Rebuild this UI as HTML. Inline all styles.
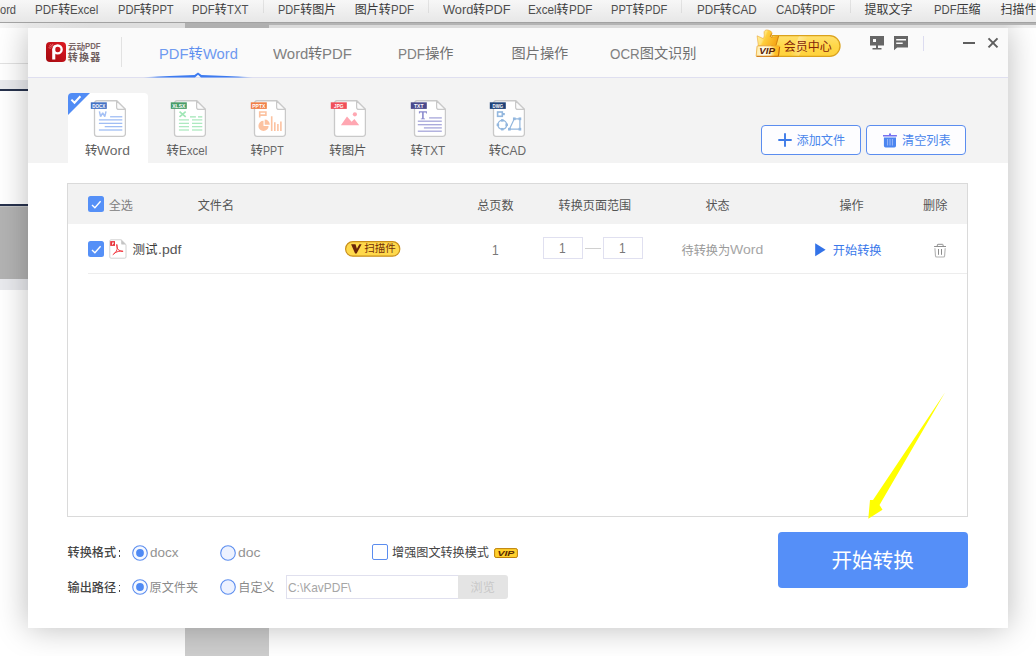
<!DOCTYPE html>
<html lang="zh"><head><meta charset="utf-8"><title>PDF转换器</title>
<style>
html,body{margin:0;padding:0}
body{width:1036px;height:656px;overflow:hidden;position:relative;background:#fff;font-family:"Liberation Sans","Noto Sans CJK SC",sans-serif}
body div,.a{position:absolute;box-sizing:border-box}
.t{white-space:nowrap;height:1em;line-height:1em}
.t::before{content:"";display:inline-block;width:0;height:1em;vertical-align:-0.12em}
.c{font-family:"Liberation Sans","Noto Sans CJK SC",sans-serif;font-size:1em;line-height:1em}
.l{font-size:1.075em;display:inline-block;transform-origin:0 0;opacity:.88}
.b .c{font-weight:bold}
.bb .c{font-weight:bold}
.bb .l{opacity:1}
.m .c{font-weight:500}
</style></head><body>
<div style="left:0px;top:63px;width:28px;height:1px;background:#e2e2e2"></div>
<div style="left:0px;top:80px;width:28px;height:9px;background:#e9eaee"></div>
<div style="left:0px;top:89px;width:28px;height:2px;background:#27324d"></div>
<div style="left:0px;top:204px;width:28px;height:2px;background:#27324d"></div>
<div style="left:0px;top:206px;width:28px;height:73px;background:#b3b3b3"></div>
<div style="left:0px;top:206px;width:28px;height:1px;background:#c6c6c6"></div>
<div style="left:0px;top:279px;width:28px;height:11px;background:#e9eaee"></div>
<div style="left:185px;top:628px;width:84px;height:28px;background:#cdcdcd"></div>
<div style="left:28px;top:28px;width:980px;height:600px;background:#fff;box-shadow:0 0 30px 0 rgba(0,0,0,.27)"></div>
<div style="left:0px;top:23px;width:185px;height:5px;background:linear-gradient(90deg,#f6f6f6 0,#e6e6e6 28px,#dedede 90px)"></div>
<div style="left:185px;top:23px;width:84px;height:5px;background:#b0b0b0"></div>
<div style="left:269px;top:23px;width:767px;height:2px;background:#b4b4b4"></div>
<div style="left:269px;top:25px;width:767px;height:3px;background:linear-gradient(90deg,#dbdbdb 0,#dbdbdb 735px,#eeeeee 755px)"></div>
<div style="left:0px;top:0px;width:1036px;height:22px;background:linear-gradient(180deg,#f7f7f7,#e7e7e7)"></div>
<div style="left:0px;top:22px;width:1036px;height:1px;background:#a2a2a2"></div>
<div class="t" style="left:0px;top:3.2px;font-size:12px;color:#383838;"><span class="l" style="transform:scaleX(0.8600);margin-right:-2.61px">ord</span></div>
<div class="t" style="left:35px;top:3.2px;font-size:12px;color:#383838;"><span class="l" style="transform:scaleX(0.8983);margin-right:-2.62px">PDF</span><span class="c">转</span><span class="l" style="transform:scaleX(0.8983);margin-right:-3.21px">Excel</span></div>
<div class="t" style="left:117.5px;top:3.2px;font-size:12px;color:#383838;"><span class="l" style="transform:scaleX(0.8649);margin-right:-3.49px">PDF</span><span class="c">转</span><span class="l" style="transform:scaleX(0.8649);margin-right:-3.39px">PPT</span></div>
<div class="t" style="left:192px;top:3.2px;font-size:12px;color:#383838;"><span class="l" style="transform:scaleX(0.8773);margin-right:-3.17px">PDF</span><span class="c">转</span><span class="l" style="transform:scaleX(0.8773);margin-right:-2.99px">TXT</span></div>
<div class="t" style="left:278.2px;top:3.2px;font-size:12px;color:#383838;"><span class="l" style="transform:scaleX(0.8528);margin-right:-3.80px">PDF</span><span class="c">转图片</span></div>
<div class="t" style="left:354.7px;top:3.2px;font-size:12px;color:#383838;"><span class="c">图片转</span><span class="l" style="transform:scaleX(0.8916);margin-right:-2.80px">PDF</span></div>
<div class="t" style="left:442.5px;top:3.2px;font-size:12px;color:#383838;"><span class="l" style="transform:scaleX(0.9933);margin-right:-0.20px">Word</span><span class="c">转</span><span class="l" style="transform:scaleX(0.9933);margin-right:-0.17px">PDF</span></div>
<div class="t" style="left:528px;top:3.2px;font-size:12px;color:#383838;"><span class="l" style="transform:scaleX(0.9071);margin-right:-2.93px">Excel</span><span class="c">转</span><span class="l" style="transform:scaleX(0.9071);margin-right:-2.40px">PDF</span></div>
<div class="t" style="left:610.8px;top:3.2px;font-size:12px;color:#383838;"><span class="l" style="transform:scaleX(0.8649);margin-right:-3.39px">PPT</span><span class="c">转</span><span class="l" style="transform:scaleX(0.8649);margin-right:-3.49px">PDF</span></div>
<div class="t" style="left:696.5px;top:3.2px;font-size:12px;color:#383838;"><span class="l" style="transform:scaleX(0.9054);margin-right:-2.44px">PDF</span><span class="c">转</span><span class="l" style="transform:scaleX(0.9054);margin-right:-2.58px">CAD</span></div>
<div class="t" style="left:775.5px;top:3.2px;font-size:12px;color:#383838;"><span class="l" style="transform:scaleX(0.8978);margin-right:-2.78px">CAD</span><span class="c">转</span><span class="l" style="transform:scaleX(0.8978);margin-right:-2.64px">PDF</span></div>
<div class="t" style="left:864.5px;top:3.2px;font-size:12px;color:#383838;"><span class="c">提取文字</span></div>
<div class="t" style="left:933.8px;top:3.2px;font-size:12px;color:#383838;"><span class="l" style="transform:scaleX(0.8800);margin-right:-3.10px">PDF</span><span class="c">压缩</span></div>
<div class="t" style="left:1000.5px;top:3.2px;font-size:12px;color:#383838;"><span class="c">扫描件</span></div>
<div style="left:263px;top:0px;width:1px;height:13px;background:rgba(0,0,0,.075)"></div>
<div style="left:428px;top:0px;width:1px;height:13px;background:rgba(0,0,0,.075)"></div>
<div style="left:681px;top:0px;width:1px;height:13px;background:rgba(0,0,0,.075)"></div>
<div style="left:850px;top:0px;width:1px;height:13px;background:rgba(0,0,0,.075)"></div>
<div style="left:28px;top:28px;width:980px;height:49px;background:#fafafa"></div>
<div style="left:28px;top:77px;width:980px;height:1px;background:#dfdff0"></div>
<div style="left:28px;top:78px;width:980px;height:85px;background:#f3f3f3"></div>
<svg class="a" style="left:46px;top:42px;" width="20" height="20" viewBox="0 0 20 20"><defs><linearGradient id="lg" x1="0" y1="1" x2="1" y2="0"><stop offset="0" stop-color="#a30a10"/><stop offset="1" stop-color="#de1a22"/></linearGradient></defs>
<rect width="20" height="20" rx="4" fill="url(#lg)"/>
<circle cx="11.700" cy="7.400" r="3.950" fill="none" stroke="#fff" stroke-width="2.400"/>
<path d="M6.200 7.400a5.500 5.500 0 0 1 3.100-4.600V17.600H6.200z" fill="#fff"/>
<path d="M3 3.600l2.600 1.800M4.400 2.200l1.800 2.600M6.600 1.900l.4 2.300M2.600 5.600l2.200.8" stroke="#f7b4b6" stroke-width=".55"/></svg>
<div class="t bb" style="left:68px;top:41.6px;font-size:8.6px;color:#7a6666;font-weight:bold"><span class="c">云动</span><span class="l" style="transform:scaleX(0.8446);margin-right:-2.87px">PDF</span></div>
<div class="t b" style="left:67.8px;top:52px;font-size:10px;color:#705e5e;"><span class="c" style="letter-spacing:0.12em">转换器</span></div>
<div style="left:121px;top:37px;width:1px;height:30px;background:#e2e2e2"></div>
<div class="t" style="left:159px;top:46.3px;font-size:14.2px;color:#5b8def;"><span class="l" style="transform:scaleX(0.9646);margin-right:-1.08px">PDF</span><span class="c">转</span><span class="l" style="transform:scaleX(0.9646);margin-right:-1.28px">Word</span></div>
<div class="t" style="left:272.5px;top:46.3px;font-size:14.2px;color:#707070;"><span class="l" style="transform:scaleX(0.9796);margin-right:-0.74px">Word</span><span class="c">转</span><span class="l" style="transform:scaleX(0.9796);margin-right:-0.62px">PDF</span></div>
<div class="t" style="left:398px;top:46.3px;font-size:14.2px;color:#707070;"><span class="l" style="transform:scaleX(0.8888);margin-right:-3.39px">PDF</span><span class="c">操作</span></div>
<div class="t" style="left:511.5px;top:46.3px;font-size:14.2px;color:#707070;"><span class="c">图片操作</span></div>
<div class="t" style="left:610px;top:46.3px;font-size:14.2px;color:#707070;"><span class="l" style="transform:scaleX(0.8764);margin-right:-4.19px">OCR</span><span class="c">图文识别</span></div>
<svg class="a" style="left:140px;top:70px;" width="116" height="9" viewBox="0 0 116 9"><defs><linearGradient id="ti" x1="0" x2="1"><stop offset="0" stop-color="#3d7bf0" stop-opacity="0"/><stop offset=".13" stop-color="#3d7bf0"/><stop offset=".87" stop-color="#3d7bf0"/><stop offset="1" stop-color="#3d7bf0" stop-opacity="0"/></linearGradient></defs>
<path d="M3 7.2 Q30 5.7 54.5 4.9 L58 2.5 L61.5 4.9 Q86 5.7 113 7.2 L113 7.6 L61 7.4 L58 4.7 L55 7.4 L3 7.6Z" fill="url(#ti)"/></svg>
<svg class="a" style="left:752px;top:28px;" width="92" height="32" viewBox="0 0 92 32"><defs>
<linearGradient id="vp" x1="0" y1="0" x2="0" y2="1"><stop offset="0" stop-color="#ffe070"/><stop offset=".5" stop-color="#ffd748"/><stop offset="1" stop-color="#ffd23c"/></linearGradient>
<linearGradient id="cr" x1="0" y1="0" x2="1" y2=".35"><stop offset="0" stop-color="#fff2ae"/><stop offset=".42" stop-color="#ffe273"/><stop offset=".5" stop-color="#ffcf3c"/><stop offset="1" stop-color="#f6aa1a"/></linearGradient>
<linearGradient id="pl" x1="0" y1="0" x2="1" y2="0"><stop offset="0" stop-color="#ffe9a0"/><stop offset=".3" stop-color="#fffdf0"/><stop offset=".6" stop-color="#fff0b8"/><stop offset=".8" stop-color="#ffc22a"/><stop offset="1" stop-color="#ffb41a"/></linearGradient>
<linearGradient id="gl" x1="0" y1="0" x2="1" y2="0"><stop offset="0" stop-color="#fff" stop-opacity="0"/><stop offset=".5" stop-color="#fff" stop-opacity=".28"/><stop offset="1" stop-color="#fff" stop-opacity="0"/></linearGradient>
</defs>
<path d="M20 7.600H77.600a10.400 10.400 0 0 1 0 20.800H20z" fill="url(#vp)" stroke="#dba21c" stroke-width="1.300"/>
<path d="M47 8.300h9l-9 19.500h-9z" fill="url(#gl)"/>
<path d="M5.100 7.800L11.300 10.600C12.500 8.500 12.300 6.500 12 4.900C11.800 2.500 14 1.600 15.600 2C18 2.400 20.300 3.600 19.800 5.400C19.500 6.600 18.600 7.400 18.300 8.300L19.500 9.500L26.600 8L23.900 17.600H6.300z" fill="url(#cr)" stroke="#e8981a" stroke-width=".5"/>
<path d="M19.800 5.400C19.500 6.600 18.600 7.400 18.300 8.300L19.500 9.500M26.600 8L23.900 17.600" fill="none" stroke="#d27f0c" stroke-width=".9"/>
<path d="M5.600 17.900H26.900a.8.800 0 0 1 .8.900L26.500 27.600a1 1 0 0 1-1 .9H4.900a.7.700 0 0 1-.7-.8L5 18.600a.7.700 0 0 1 .6-.7z" fill="url(#pl)" stroke="#e9a224" stroke-width=".7"/>
<path d="M4.600 28.300H25.500a1 1 0 0 0 1-.9L27.600 19" fill="none" stroke="#c96c0a" stroke-width="1.100"/>
<text x="7.200" y="26" font-family="Liberation Sans, sans-serif" font-weight="bold" font-style="italic" font-size="9" fill="#5a1e08" textLength="15.700" lengthAdjust="spacingAndGlyphs">VIP</text></svg>
<div class="t" style="left:783.8px;top:39.7px;font-size:12px;color:#86260a;"><span class="c">会员中心</span></div>
<svg class="a" style="left:869px;top:35px;" width="16" height="16" viewBox="0 0 16 16"><path d="M1 1h14v9.600H9v2.400h3.500v1.500h-9V13H7v-2.400H1z" fill="#666"/><rect x="4" y="4" width="3" height="3" fill="#fafafa"/></svg>
<svg class="a" style="left:893px;top:35px;" width="16" height="16" viewBox="0 0 16 16"><path d="M1 1h14v11.400H4.200L1 15.200z" fill="#666"/><path d="M3.200 4h9.800v1.500H3.200zM3.200 7.400h6.500v1.600H3.200z" fill="#fafafa"/></svg>
<div style="left:923px;top:36px;width:1px;height:15px;background:#dcdcf0"></div>
<div style="left:963px;top:42px;width:12px;height:2px;background:#5e5e5e"></div>
<svg class="a" style="left:986px;top:35.1px;" width="14" height="14" viewBox="0 0 14 14"><path d="M2.500 3.400l9 9M11.500 3.400l-9 9" stroke="#5e5e5e" stroke-width="2" fill="none"/></svg>
<div style="left:68px;top:93px;width:80px;height:70px;background:#fff;border-radius:4px 4px 0 0"></div>
<svg class="a" style="left:68px;top:93px;" width="24" height="24" viewBox="0 0 24 24"><path d="M0 22V4a4 4 0 0 1 4-4h18z" fill="#518cf5"/><path d="M3.400 6.600l3.100 3.100 5.900-6.400" stroke="#fff" stroke-width="2" fill="none"/></svg>
<svg class="a" style="left:90.2px;top:99.7px;" width="36" height="38" viewBox="0 0 36 38"><path d="M7 .75H26.6L35.4 9.4V33.8a2.500 2.500 0 0 1-2.500 2.500H7a2.500 2.500 0 0 1-2.500-2.500V3.250A2.500 2.500 0 0 1 7 .75z" fill="#fff" stroke="#c9c9c9" stroke-width="1.300"/><path d="M26.6 .75V7.2a2.200 2.200 0 0 0 2.200 2.200h6.600z" fill="#fbfbfb" stroke="#c9c9c9" stroke-width="1.200" stroke-linejoin="round"/><rect x=".8" y="2.300" width="16" height="6.600" fill="#4472c4"/><text x="8.800" y="7.700" text-anchor="middle" font-family="Liberation Sans, sans-serif" font-weight="bold" font-size="5.200" fill="#fff" textLength="13" lengthAdjust="spacingAndGlyphs">DOCX</text><path d="M9.4 11.400L10.600 16.600L12.700 12.900L14.800 16.600L16 11.400" stroke="#a5c1f5" stroke-width="1.500" stroke-linejoin="bevel" fill="none"/><path d="M20.1 16.8H32.3" stroke="#8fb2f3" stroke-width="1.100"/><path d="M8.9 19.9H32.3" stroke="#8fb2f3" stroke-width="1.100"/><path d="M8.9 23.3H32.3" stroke="#8fb2f3" stroke-width="1.100"/><path d="M14.7 26.7H32.3" stroke="#8fb2f3" stroke-width="1.100"/><path d="M8.9 30H32.3" stroke="#8fb2f3" stroke-width="1.100"/></svg>
<svg class="a" style="left:170.1px;top:99.7px;" width="36" height="38" viewBox="0 0 36 38"><path d="M7 .75H26.6L35.4 9.4V33.8a2.500 2.500 0 0 1-2.500 2.500H7a2.500 2.500 0 0 1-2.500-2.500V3.250A2.500 2.500 0 0 1 7 .75z" fill="#fff" stroke="#c9c9c9" stroke-width="1.300"/><path d="M26.6 .75V7.2a2.200 2.200 0 0 0 2.200 2.200h6.600z" fill="#fbfbfb" stroke="#c9c9c9" stroke-width="1.200" stroke-linejoin="round"/><rect x=".8" y="2.300" width="16" height="6.600" fill="#4a9d6a"/><text x="8.800" y="7.700" text-anchor="middle" font-family="Liberation Sans, sans-serif" font-weight="bold" font-size="5.200" fill="#fff" textLength="13" lengthAdjust="spacingAndGlyphs">XLSX</text><path d="M9.500 11.700L15.700 16.800M15.700 11.700L9.500 16.800" stroke="#9fe6b5" stroke-width="1.700"/><path d="M20 16.800h5.900M28 16.800h4.300" stroke="#9fe6b5" stroke-width="1.200"/><path d="M8.9 19.9H19" stroke="#9fe6b5" stroke-width="1.100"/><path d="M22 19.9H32.3" stroke="#9fe6b5" stroke-width="1.100"/><path d="M8.9 23.3H19" stroke="#9fe6b5" stroke-width="1.100"/><path d="M22 23.3H32.3" stroke="#9fe6b5" stroke-width="1.100"/><path d="M8.9 26.7H19" stroke="#9fe6b5" stroke-width="1.100"/><path d="M22 26.7H32.3" stroke="#9fe6b5" stroke-width="1.100"/><path d="M8.9 30H19" stroke="#9fe6b5" stroke-width="1.100"/><path d="M22 30H32.3" stroke="#9fe6b5" stroke-width="1.100"/></svg>
<svg class="a" style="left:250.2px;top:99.7px;" width="36" height="38" viewBox="0 0 36 38"><path d="M7 .75H26.6L35.4 9.4V33.8a2.500 2.500 0 0 1-2.500 2.500H7a2.500 2.500 0 0 1-2.500-2.500V3.250A2.500 2.500 0 0 1 7 .75z" fill="#fff" stroke="#c9c9c9" stroke-width="1.300"/><path d="M26.6 .75V7.2a2.200 2.200 0 0 0 2.200 2.200h6.600z" fill="#fbfbfb" stroke="#c9c9c9" stroke-width="1.200" stroke-linejoin="round"/><rect x=".8" y="2.300" width="16" height="6.600" fill="#f08048"/><text x="8.800" y="7.700" text-anchor="middle" font-family="Liberation Sans, sans-serif" font-weight="bold" font-size="5.200" fill="#fff" textLength="13" lengthAdjust="spacingAndGlyphs">PPTX</text><path d="M9.700 17.400v-5.400h6.200v3.100h-6.200" stroke="#fcc2a0" stroke-width="1.600" fill="none"/><path d="M13.500 20.800a5.100 5.100 0 1 0 5.100 5.100h-5.100z" fill="#fcc2a0"/><path d="M14.700 19.600a5.100 5.100 0 0 1 5.100 5.100h-5.100z" fill="#fcc2a0"/><path d="M21.700 31V16.200M24.800 31V22.200M27.900 31V24.100M30.900 31V21.400" stroke="#fcc2a0" stroke-width="1.600"/></svg>
<svg class="a" style="left:330.1px;top:99.700px;" width="36" height="38" viewBox="0 0 36 38"><path d="M7 .75H26.6L35.4 9.4V33.8a2.500 2.500 0 0 1-2.500 2.500H7a2.500 2.500 0 0 1-2.500-2.500V3.250A2.500 2.500 0 0 1 7 .75z" fill="#fff" stroke="#c9c9c9" stroke-width="1.300"/><path d="M26.6 .75V7.2a2.200 2.200 0 0 0 2.200 2.200h6.600z" fill="#fbfbfb" stroke="#c9c9c9" stroke-width="1.200" stroke-linejoin="round"/><rect x=".8" y="2.300" width="16" height="6.600" fill="#f0505a"/><text x="8.800" y="7.700" text-anchor="middle" font-family="Liberation Sans, sans-serif" font-weight="bold" font-size="5.200" fill="#fff" textLength="9.5" lengthAdjust="spacingAndGlyphs">JPG</text><path d="M10.900 25.200L17 16.500l4.600 5.300 2.800-2.900 4.800 6.300z" fill="#ffa7b2"/><circle cx="24.900" cy="14.300" r="2.100" fill="#ffa7b2"/></svg>
<svg class="a" style="left:410.2px;top:99.7px;" width="36" height="38" viewBox="0 0 36 38"><path d="M7 .75H26.6L35.4 9.4V33.8a2.500 2.500 0 0 1-2.500 2.500H7a2.500 2.500 0 0 1-2.500-2.500V3.250A2.500 2.500 0 0 1 7 .75z" fill="#fff" stroke="#c9c9c9" stroke-width="1.300"/><path d="M26.6 .75V7.2a2.200 2.200 0 0 0 2.200 2.200h6.600z" fill="#fbfbfb" stroke="#c9c9c9" stroke-width="1.200" stroke-linejoin="round"/><rect x=".8" y="2.300" width="16" height="6.600" fill="#4a4a8c"/><text x="8.800" y="7.700" text-anchor="middle" font-family="Liberation Sans, sans-serif" font-weight="bold" font-size="5.200" fill="#fff" textLength="9.5" lengthAdjust="spacingAndGlyphs">TXT</text><path d="M8.900 11.200h8v2.200h-.8l-.3-.9h-2.100v6h1.300v.8h-4.200v-.8h1.300v-6h-2.100l-.3.9h-.8z" fill="#8a8acd"/><path d="M19.100 17.900H31.800" stroke="#a6a6da" stroke-width="1.300"/><path d="M7.8 21.2H31.800" stroke="#a6a6da" stroke-width="1.300"/><path d="M7.8 24.7H31.800" stroke="#a6a6da" stroke-width="1.300"/><path d="M13.9 27.9H31.800" stroke="#a6a6da" stroke-width="1.300"/><path d="M7.8 31.2H31.800" stroke="#a6a6da" stroke-width="1.300"/></svg>
<svg class="a" style="left:489.2px;top:99.7px;" width="36" height="38" viewBox="0 0 36 38"><path d="M7 .75H26.6L35.4 9.4V33.8a2.500 2.500 0 0 1-2.500 2.500H7a2.500 2.500 0 0 1-2.500-2.500V3.250A2.500 2.500 0 0 1 7 .75z" fill="#fff" stroke="#c9c9c9" stroke-width="1.300"/><path d="M26.6 .75V7.2a2.200 2.200 0 0 0 2.200 2.200h6.600z" fill="#fbfbfb" stroke="#c9c9c9" stroke-width="1.200" stroke-linejoin="round"/><rect x=".8" y="2.300" width="16" height="6.600" fill="#1f4278"/><text x="8.800" y="7.700" text-anchor="middle" font-family="Liberation Sans, sans-serif" font-weight="bold" font-size="5.200" fill="#fff" textLength="10.5" lengthAdjust="spacingAndGlyphs">DWG</text><rect x="8.6" y="12" width="4.7" height="4.3" fill="none" stroke="#93b7de" stroke-width="1.6"/><rect x="13.8" y="13" width="2" height="2.2" fill="#93b7de"/><circle cx="13.3" cy="24.8" r="4.4" fill="none" stroke="#93b7de" stroke-width="1.4"/><rect x="12.05" y="19.15" width="2.5" height="2.5" fill="#93b7de"/><rect x="12.05" y="27.95" width="2.5" height="2.5" fill="#93b7de"/><rect x="7.65" y="23.55" width="2.5" height="2.5" fill="#93b7de"/><rect x="16.45" y="23.55" width="2.5" height="2.5" fill="#93b7de"/><path d="M25.3 18.8h5.600v10.400h-10.500z" fill="none" stroke="#93b7de" stroke-width="1.200"/><rect x="23.95" y="17.45" width="2.7" height="2.7" fill="#93b7de"/><rect x="29.55" y="17.45" width="2.7" height="2.7" fill="#93b7de"/><rect x="29.55" y="27.85" width="2.7" height="2.7" fill="#93b7de"/><rect x="19.05" y="27.85" width="2.7" height="2.7" fill="#93b7de"/></svg>
<div class="t" style="left:84.9px;top:144.3px;font-size:12.4px;color:#555;"><span class="c">转</span><span class="l" style="transform:scaleX(1.0411);margin-right:1.30px">Word</span></div>
<div class="t" style="left:166.6px;top:144.3px;font-size:12.4px;color:#555;"><span class="c">转</span><span class="l" style="transform:scaleX(0.8716);margin-right:-4.18px">Excel</span></div>
<div class="t" style="left:250.5px;top:144.3px;font-size:12.4px;color:#555;"><span class="c">转</span><span class="l" style="transform:scaleX(0.7951);margin-right:-5.31px">PPT</span></div>
<div class="t" style="left:329.3px;top:144.3px;font-size:12.4px;color:#555;"><span class="c">转图片</span></div>
<div class="t" style="left:410.5px;top:144.3px;font-size:12.4px;color:#555;"><span class="c">转</span><span class="l" style="transform:scaleX(0.8778);margin-right:-3.08px">TXT</span></div>
<div class="t" style="left:488.7px;top:144.3px;font-size:12.4px;color:#555;"><span class="c">转</span><span class="l" style="transform:scaleX(0.8923);margin-right:-3.03px">CAD</span></div>
<div style="left:761px;top:125px;width:100px;height:30px;background:#fdfdff;border:1px solid #5b8def;border-radius:4px"></div>
<svg class="a" style="left:778px;top:133px;" width="14" height="14" viewBox="0 0 14 14"><path d="M7 .3v13.400M.3 7h13.400" stroke="#3d7be8" stroke-width="1.900"/></svg>
<div class="t" style="left:796.5px;top:133.8px;font-size:12.2px;color:#4a86ec;"><span class="c">添加文件</span></div>
<div style="left:866px;top:125px;width:100px;height:30px;background:#fdfdff;border:1px solid #5b8def;border-radius:4px"></div>
<svg class="a" style="left:883px;top:132.5px;" width="14" height="15" viewBox="0 0 14 15"><path d="M0 1.900H6V.5H8V1.900H13.900V3.500H0z" fill="#7571f0"/><path d="M.9 4.500H13v8.300a1.600 1.600 0 0 1-1.600 1.600H2.500a1.600 1.600 0 0 1-1.600-1.600z" fill="#4c86f0"/><path d="M4.600 6v6.500M7 6v6.500M9.400 6v6.500" stroke="#9bb8f8" stroke-width="1"/></svg>
<div class="t" style="left:902px;top:133.8px;font-size:12.2px;color:#4a86ec;"><span class="c">清空列表</span></div>
<div style="left:67px;top:183px;width:901px;height:334px;border:1px solid #dadada;background:#fff"></div>
<div style="left:68px;top:184px;width:899px;height:40px;background:#f2f2f2"></div>
<svg class="a" style="left:88px;top:196px;" width="16" height="16" viewBox="0 0 16 16"><rect width="16" height="16" rx="2.500" fill="#5590f7"/><path d="M4 8.900l2.900 2.800 5.700-6.500" stroke="#fff" stroke-width="1.350" fill="none"/></svg>
<div class="t" style="left:108.7px;top:198.8px;font-size:12.1px;color:#808080;"><span class="c">全选</span></div>
<div class="t" style="left:197.7px;top:198.8px;font-size:12.1px;color:#555;"><span class="c">文件名</span></div>
<div class="t" style="left:477.2px;top:198.8px;font-size:12.1px;color:#555;"><span class="c">总页数</span></div>
<div class="t" style="left:558.6px;top:198.8px;font-size:12.1px;color:#555;"><span class="c">转换页面范围</span></div>
<div class="t" style="left:705.5px;top:198.8px;font-size:12.1px;color:#555;"><span class="c">状态</span></div>
<div class="t" style="left:839.4px;top:198.8px;font-size:12.1px;color:#555;"><span class="c">操作</span></div>
<div class="t" style="left:923.1px;top:198.8px;font-size:12.1px;color:#555;"><span class="c">删除</span></div>
<svg class="a" style="left:88px;top:241px;" width="16" height="16" viewBox="0 0 16 16"><rect width="16" height="16" rx="2.500" fill="#5590f7"/><path d="M4 8.900l2.900 2.800 5.700-6.500" stroke="#fff" stroke-width="1.350" fill="none"/></svg>
<svg class="a" style="left:109px;top:239px;" width="18" height="20" viewBox="0 0 18 20"><path d="M2 .8H12.200L17 5.600V18a1.200 1.200 0 0 1-1.200 1.200H2A1.200 1.200 0 0 1 .8 18V2A1.200 1.200 0 0 1 2 .8z" fill="#fff" stroke="#d2d2d2" stroke-width="1"/>
<path d="M12.200 .8V4.400a1.200 1.200 0 0 0 1.200 1.200H17z" fill="#c4c4c4"/>
<rect x="1.200" y="2.100" width="4.800" height="4.800" fill="#e8343c"/><path d="M3 3.600h2v1.200h-1v1h-1z" fill="#fde0e0"/>
<path d="M7.800 5.800C8.600 8 8.400 10 7.400 12C6.400 13.800 5.200 15 4.100 15.600M7.800 5.800C7.400 8.400 8.600 10.400 10 11.200C11.200 11.900 12.600 12.300 13.700 12.300M5 14.400C7.600 12.600 10.600 11.700 13.700 12.300" stroke="#f0343c" stroke-width=".95" fill="none" stroke-linecap="round"/></svg>
<div class="t" style="left:132.6px;top:243.4px;font-size:12.5px;color:#3c3c3c;"><span class="c">测试</span><span class="l" style="transform:scaleX(1.0406);margin-right:0.91px">.pdf</span></div>
<svg class="a" style="left:345px;top:241px;" width="56" height="18" viewBox="0 0 56 18"><rect x=".6" y=".6" width="54.200" height="14.600" rx="7.300" fill="#ffd94c" stroke="#c98f1a" stroke-width="1.200"/><path d="M6.100 3.200H10.500L11.900 7.800L14.400 3.200H16.600L11.600 12.400H10.100z" fill="#6a2408"/></svg>
<div class="t" style="left:364.3px;top:243.2px;font-size:10.5px;color:#74300a;"><span class="c">扫描件</span></div>
<div class="t" style="left:492.3px;top:243.6px;font-size:13px;color:#666;"><span class="l" style="transform:scaleX(0.8600);margin-right:-1.09px">1</span></div>
<div style="left:543px;top:237px;width:40px;height:22px;background:#fff;border:1px solid #e0e0f0"></div>
<div class="t" style="left:559.3px;top:242px;font-size:13px;color:#666;"><span class="l" style="transform:scaleX(0.8600);margin-right:-1.09px">1</span></div>
<div style="left:585px;top:248px;width:16px;height:1px;background:#d0d0d0"></div>
<div style="left:603px;top:237px;width:40px;height:22px;background:#fff;border:1px solid #e0e0f0"></div>
<div class="t" style="left:619.3px;top:242px;font-size:13px;color:#666;"><span class="l" style="transform:scaleX(0.8600);margin-right:-1.09px">1</span></div>
<div class="t" style="left:681.5px;top:243.7px;font-size:12.2px;color:#9a9a9a;"><span class="c">待转换为</span><span class="l" style="transform:scaleX(1.0678);margin-right:2.11px">Word</span></div>
<svg class="a" style="left:815px;top:243px;" width="11" height="14" viewBox="0 0 11 14"><path d="M.2 .3L10.600 6.800.2 13.300z" fill="#3373e8"/></svg>
<div class="t" style="left:832.8px;top:243.7px;font-size:12.2px;color:#3a78ea;"><span class="c">开始转换</span></div>
<svg class="a" style="left:933px;top:243px;" width="14" height="15" viewBox="0 0 14 15"><path d="M1.100 3.500H13M4.300 3.500V2a.7.700 0 0 1 .7-.7H9.400a.7.700 0 0 1 .7.700V3.500" stroke="#909090" stroke-width="1" fill="none"/><path d="M1.900 5.300L2.500 12.900a1.200 1.200 0 0 0 1.200 1.100H10.400a1.200 1.200 0 0 0 1.200-1.100L12.200 5.300" stroke="#b4b4b4" stroke-width="1.100" fill="none"/><path d="M5.500 6V11.800M8.500 6V11.800" stroke="#8c8c8c" stroke-width="1" fill="none"/></svg>
<div style="left:88px;top:273px;width:879px;height:1px;background:#ededed"></div>
<svg class="a" style="left:860px;top:388px;" width="90" height="134" viewBox="0 0 90 134"><path d="M85 4.500L13 112L10 112L8.300 130.800L22.500 121.700L19.500 117z" fill="#ffff00"/></svg>
<div class="t m" style="left:67.6px;top:546.4px;font-size:12.1px;color:#444;"><span class="c">转换格式</span></div>
<div class="t m" style="left:67.6px;top:581.2px;font-size:12.1px;color:#444;"><span class="c">输出路径</span></div>
<div style="left:118.5px;top:549.9px;width:1.7px;height:1.8px;background:#4a4a4a"></div>
<div style="left:118.5px;top:555.4px;width:1.7px;height:1.8px;background:#4a4a4a"></div>
<div style="left:118.5px;top:584.7px;width:1.7px;height:1.8px;background:#4a4a4a"></div>
<div style="left:118.5px;top:590.2px;width:1.7px;height:1.8px;background:#4a4a4a"></div>
<svg class="a" style="left:131.8px;top:544.5px;" width="16" height="16" viewBox="0 0 16 16"><circle cx="8" cy="8" r="7.300" fill="#f6f9ff" stroke="#5b8def" stroke-width="1.100"/><circle cx="8" cy="8" r="3.900" fill="#4f8af4"/></svg>
<svg class="a" style="left:219.9px;top:544.5px;" width="16" height="16" viewBox="0 0 16 16"><circle cx="8" cy="8" r="7.300" fill="#edf2ff" stroke="#5b8def" stroke-width="1.100"/></svg>
<svg class="a" style="left:131.8px;top:579.3px;" width="16" height="16" viewBox="0 0 16 16"><circle cx="8" cy="8" r="7.300" fill="#f6f9ff" stroke="#5b8def" stroke-width="1.100"/><circle cx="8" cy="8" r="3.900" fill="#4f8af4"/></svg>
<svg class="a" style="left:219.9px;top:579.3px;" width="16" height="16" viewBox="0 0 16 16"><circle cx="8" cy="8" r="7.300" fill="#edf2ff" stroke="#5b8def" stroke-width="1.100"/></svg>
<div class="t" style="left:150px;top:546.6px;font-size:12.2px;color:#858585;"><span class="l" style="transform:scaleX(1.0288);margin-right:0.80px">docx</span></div>
<div class="t" style="left:238px;top:546.6px;font-size:12.2px;color:#858585;"><span class="l" style="transform:scaleX(1.0643);margin-right:1.36px">doc</span></div>
<div class="t" style="left:149.6px;top:581.2px;font-size:12.1px;color:#8a8a8a;"><span class="c">原文件夹</span></div>
<div class="t" style="left:238.3px;top:581.2px;font-size:12.1px;color:#8a8a8a;"><span class="c">自定义</span></div>
<div style="left:372px;top:544px;width:16px;height:16px;background:#fff;border:1px solid #5b8def;border-radius:2px"></div>
<div class="t" style="left:392.1px;top:546.4px;font-size:12.1px;color:#444;"><span class="c">增强图文转换模式</span></div>
<svg class="a" style="left:494px;top:548.1px;" width="24" height="11" viewBox="0 0 24 11"><rect x=".6" y=".6" width="22.800" height="8.900" rx="1.500" fill="#ffd02c" stroke="#bd8008" stroke-width="1"/><text x="3.400" y="8.200" font-family="Liberation Sans, sans-serif" font-weight="bold" font-style="italic" font-size="7.600" fill="#5a2a00" textLength="17" lengthAdjust="spacingAndGlyphs">VIP</text></svg>
<div style="left:286px;top:575px;width:173px;height:24px;background:#fff;border:1px solid #e0e0ee"></div>
<div class="t" style="left:287.9px;top:581px;font-size:12.5px;color:#9a9a9a;"><span class="l" style="transform:scaleX(0.8891);margin-right:-7.86px">C:\KavPDF\</span></div>
<div style="left:458px;top:575px;width:50px;height:24px;background:#e4e4e4;border-radius:0 3px 3px 0"></div>
<div class="t" style="left:470.6px;top:581px;font-size:12.1px;color:#c8c8c8;"><span class="c">浏览</span></div>
<div style="left:778px;top:532px;width:190px;height:56px;background:#558ff8;border-radius:4px"></div>
<div class="t" style="left:831.5px;top:549.9px;font-size:20.6px;color:#fff;"><span class="c">开始转换</span></div>
</body></html>
